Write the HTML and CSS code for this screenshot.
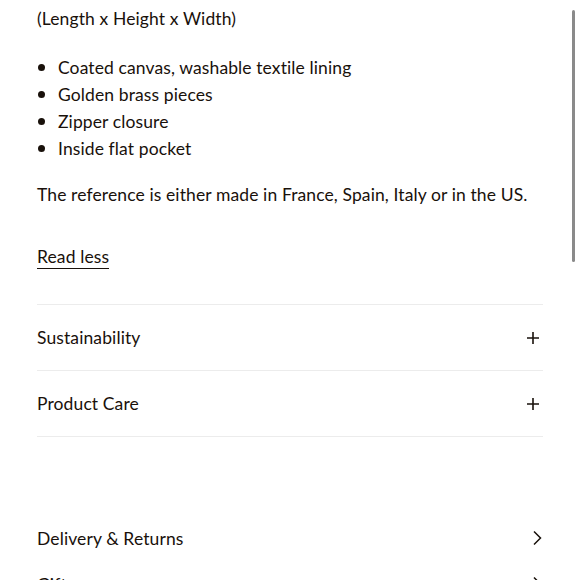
FILE: index.html
```html
<!DOCTYPE html>
<html lang="en">
<head>
<meta charset="utf-8">
<title>Product details</title>
<link rel="stylesheet" href="styles.css">
</head>
<body>
<div class="page">
  <p class="dims">(Length x Height x Width)</p>
  <ul class="features">
    <li>Coated canvas, washable textile lining</li>
    <li>Golden brass pieces</li>
    <li>Zipper closure</li>
    <li>Inside flat pocket</li>
  </ul>
  <p class="origin">The reference is either made in France, Spain, Italy or in the US.</p>
  <a class="read-less" href="#">Read less</a>

  <div class="accordion">
    <div class="acc-row">
      <span>Sustainability</span>
      <svg class="plus" width="14" height="14" viewBox="0 0 14 14"><path d="M7 1v12M1 7h12" stroke="#19110b" stroke-width="1.6" fill="none"/></svg>
    </div>
    <div class="acc-row">
      <span>Product Care</span>
      <svg class="plus" width="14" height="14" viewBox="0 0 14 14"><path d="M7 1v12M1 7h12" stroke="#19110b" stroke-width="1.6" fill="none"/></svg>
    </div>
  </div>

  <div class="links">
    <div class="link-row">
      <span>Delivery &amp; Returns</span>
      <svg class="chev" width="10" height="16" viewBox="0 0 10 16"><path d="M2 1.5l6.5 6.5L2 14.5" stroke="#19110b" stroke-width="1.5" fill="none"/></svg>
    </div>
    <div class="link-row">
      <span>Gifts</span>
      <svg class="chev" width="10" height="16" viewBox="0 0 10 16"><path d="M2 1.5l6.5 6.5L2 14.5" stroke="#19110b" stroke-width="1.5" fill="none"/></svg>
    </div>
  </div>
</div>
<div class="scrollbar"></div>
</body>
</html>
```
FILE: styles.css
```css
html, body {
  margin: 0;
  padding: 0;
  background: #fff;
  overflow: hidden;
}
body {
  font-family: "Lato", "Liberation Sans", sans-serif;
  font-weight: 400;
  color: #19110b;
  font-size: 17.5px;
  letter-spacing: 0.11px;
  height: 580px;
  position: relative;
}
.page {
  padding: 5px 37px 0 37px;
}
.dims {
  margin: 0;
  line-height: 27px;
}
.features {
  list-style: none;
  margin: 22px 0 0 0;
  padding: 0;
}
.features li {
  display: flex;
  align-items: center;
  line-height: 27px;
}
.features li::before {
  content: "";
  width: 7px;
  height: 7px;
  border-radius: 50%;
  background: #19110b;
  margin: 0 13px 0 1px;
  flex: none;
}
.origin {
  margin: 19px 0 0 0;
  line-height: 27px;
  white-space: nowrap;
}
.read-less {
  display: inline-block;
  margin-top: 38px;
  color: #19110b;
  text-decoration: none;
  line-height: 22px;
  border-bottom: 1.5px solid #19110b;
}
.accordion {
  margin-top: 35px;
  border-top: 1px solid #ececec;
}
.acc-row {
  display: flex;
  justify-content: space-between;
  align-items: center;
  height: 65px;
  border-bottom: 1px solid #ececec;
}
.plus {
  margin-right: 3px;
}
.links {
  margin-top: 78px;
}
.link-row {
  display: flex;
  justify-content: space-between;
  align-items: center;
  height: 46px;
}
.chev {
  margin-right: 1px;
}
.scrollbar {
  position: absolute;
  right: 5px;
  top: 10px;
  width: 3px;
  height: 252px;
  border-radius: 2px;
  background: #8a8a8a;
}
```
